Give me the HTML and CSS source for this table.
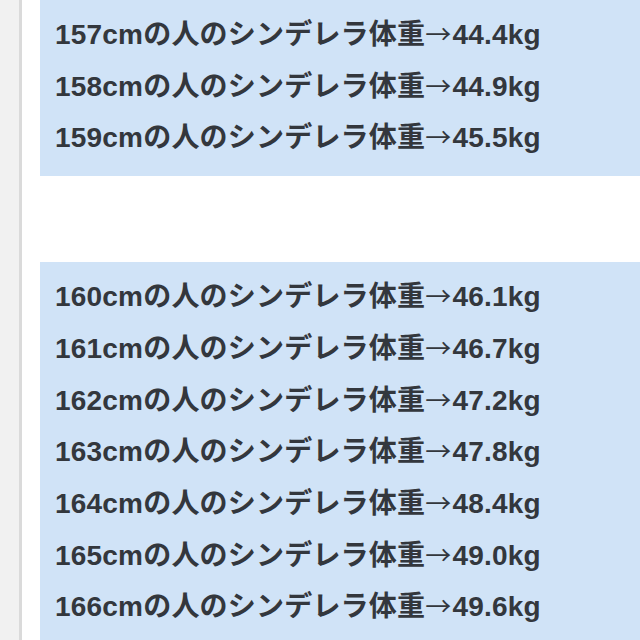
FILE: index.html
```html
<!DOCTYPE html>
<html>
<head>
  <meta charset="UTF-8">
  <title>シンデレラ体重</title>
  <link rel="stylesheet" href="styles.css">
</head>
<body>
  <div class="page">
    <div class="sidebar"></div>

    <div class="content">
      <div class="weight-box">
        <p>157cmの人のシンデレラ体重<span class="arrow">→</span>44.4kg</p>
        <p>158cmの人のシンデレラ体重<span class="arrow">→</span>44.9kg</p>
        <p>159cmの人のシンデレラ体重<span class="arrow">→</span>45.5kg</p>
      </div>

      <div class="weight-box">
        <p>160cmの人のシンデレラ体重<span class="arrow">→</span>46.1kg</p>
        <p>161cmの人のシンデレラ体重<span class="arrow">→</span>46.7kg</p>
        <p>162cmの人のシンデレラ体重<span class="arrow">→</span>47.2kg</p>
        <p>163cmの人のシンデレラ体重<span class="arrow">→</span>47.8kg</p>
        <p>164cmの人のシンデレラ体重<span class="arrow">→</span>48.4kg</p>
        <p>165cmの人のシンデレラ体重<span class="arrow">→</span>49.0kg</p>
        <p>166cmの人のシンデレラ体重<span class="arrow">→</span>49.6kg</p>
      </div>
    </div>
  </div>
</body>
</html>
```

FILE: styles.css
```css
:root {
  --box-color: #d0e3f7;
  --text-color: #33373d;
  --side-bg: #f1f1f1;
  --side-border: #dadada;
}

* {
  box-sizing: border-box;
  margin: 0;
  padding: 0;
}

body {
  width: 640px;
  height: 640px;
  overflow: hidden;
  background-color: #ffffff;
  font-family: 'Liberation Sans', 'Noto Sans CJK JP', sans-serif;
  color: var(--text-color);
}

.page {
  display: flex;
  height: 640px;
}

.sidebar {
  width: 22px;
  flex-shrink: 0;
  background-color: var(--side-bg);
  border-right: 3px solid var(--side-border);
}

.content {
  flex: 1;
  padding-left: 18px;
  display: flex;
  flex-direction: column;
  gap: 86px;
}

.weight-box {
  background-color: var(--box-color);
  padding: 9px 0 12px 15px;
}

.weight-box p {
  font-size: 28px;
  font-weight: 700;
  line-height: 51.7px;
  letter-spacing: 0.2px;
  white-space: nowrap;
}

.arrow {
  font-family: 'Noto Sans CJK JP', sans-serif;
  font-weight: 400;
  font-size: 26px;
  line-height: 0;
  margin-right: 1px;
}
```
